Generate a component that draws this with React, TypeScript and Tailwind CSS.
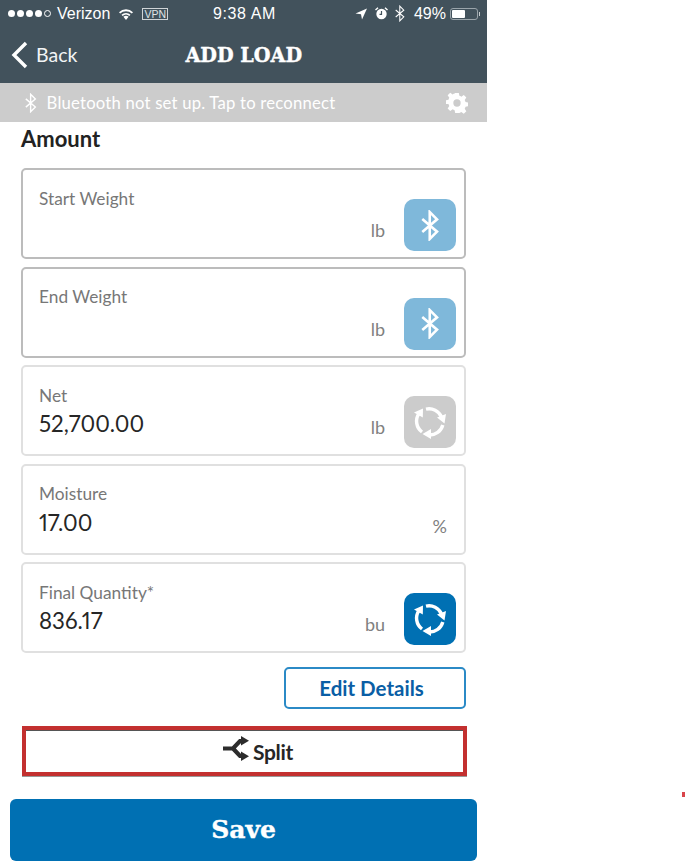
import React from "react";

const BtGlyph = ({ size = 24, sw = 2 }: { size?: number; sw?: number }) => (
  <svg width={size * 0.58} height={size} viewBox="0 0 14 24" fill="none" stroke="white" strokeWidth={sw} strokeLinejoin="miter">
    <path d="M1 7 L12.5 16.8 L6.8 22.5 V1.5 L12.5 7.2 L1 17" />
  </svg>
);

const Sync = () => (
  <svg width="34" height="34" viewBox="0 0 34 34" fill="none" stroke="white" strokeWidth="3.4">
    <path d="M13 4.2 A13.5 13.5 0 0 1 28.5 12" />
    <path fill="white" stroke="none" d="M33 9 L31.5 18.5 L24 12.5 Z" />
    <path d="M29.8 20 A13.5 13.5 0 0 1 16 30" />
    <path fill="white" stroke="none" d="M18 24 L18 34 L9.5 29 Z" />
    <path d="M9 27 A13.5 13.5 0 0 1 6 8.5" />
    <path fill="white" stroke="none" d="M1 7.5 L10 3.5 L9.8 12.5 Z" />
  </svg>
);

function Card({ label, value, unit, icon, dark }: { label: string; value?: string; unit: string; icon?: "bt" | "gray" | "blue"; dark?: boolean }) {
  return (
    <div className={`h-[91px] rounded-[5px] border-2 flex ${dark ? "border-[#bcbcbc]" : "border-[#e0e0e0]"}`}>
      <div className="flex-1 pl-4 pt-[16.5px] flex flex-col">
        <div className="text-[17.3px] leading-[24px] text-[#777777]">{label}</div>
        <div className="text-[22.3px] leading-[34px] text-[#262626] mt-[-0.5px] proportional-nums">{value}</div>
      </div>
      <div className="flex items-end pb-[15px]">
        <span className="text-[18px] leading-[24px] text-[#808080]">{unit}</span>
      </div>
      {icon ? (
        <div className="w-[52px] ml-[19px] mr-[8px] mt-[29px]">
          <div
            className={`w-[52px] h-[52px] rounded-[10px] flex items-center justify-center ${
              icon === "bt" ? "bg-[#7fb8da]" : icon === "gray" ? "bg-[#cccccc]" : "bg-[#0070b3]"
            }`}
          >
            {icon === "bt" ? <BtGlyph size={31} sw={2} /> : <Sync />}
          </div>
        </div>
      ) : (
        <div className="w-[17px]" />
      )}
    </div>
  );
}

export default function App() {
  return (
    <div className="relative h-[865px] w-[688px] bg-white overflow-hidden font-['Lato','Open_Sans',sans-serif]">
      <div className="w-[487px]">
        <header className="h-[83px] bg-[#42525c] text-white">
          <div className="relative h-[27px] flex items-center justify-between pl-[8px] pr-[7px] font-['Liberation_Sans',sans-serif]">
            <div className="flex items-center">
              <div className="flex items-center gap-[2px]">
                {[0, 1, 2, 3].map((i) => (
                  <span key={i} className="w-[7px] h-[7px] rounded-full bg-white" />
                ))}
                <span className="w-[7px] h-[7px] rounded-full border border-white" />
              </div>
              <span className="ml-[6px] text-[16px] leading-none">Verizon</span>
              <svg className="ml-[8px]" width="16" height="12" viewBox="0 0 16 12" fill="white">
                <path d="M8 12 L5.4 8.8 A4 4 0 0 1 10.6 8.8 Z" />
                <path d="M3.5 6.8 A6.6 6.6 0 0 1 12.5 6.8 L11.4 8 A5 5 0 0 0 4.6 8 Z" />
                <path d="M1 4.2 A10 10 0 0 1 15 4.2 L13.8 5.6 A8.2 8.2 0 0 0 2.2 5.6 Z" />
              </svg>
              <span className="ml-[8px] h-[12px] w-[26px] border border-[#cfd4d7] text-[10.5px] leading-[10px] text-center text-[#dfe2e4]">VPN</span>
            </div>
            <span className="absolute left-[213px] text-[16px] leading-none tracking-[0.6px]">9:38 AM</span>
            <div className="flex items-center">
              <svg width="12" height="12" viewBox="0 0 12 12" fill="white">
                <path d="M12 0.5 L0.5 5.5 L6 6.2 L7 11.5 Z" />
              </svg>
              <svg className="ml-[8px]" width="13" height="13" viewBox="0 0 13 13">
                <circle cx="6.5" cy="7" r="5.2" fill="white" />
                <path d="M6.5 4 V7.3 H4.5" stroke="#42525c" strokeWidth="1.2" fill="none" />
                <path d="M0.5 3 L3 0.7 M12.5 3 L10 0.7" stroke="white" strokeWidth="1.4" />
              </svg>
              <span className="ml-[7px] flex"><BtGlyph size={17} sw={1.5} /></span>
              <span className="ml-[9px] text-[16px] leading-none">49%</span>
              <div className="ml-[4px] flex items-center">
                <div className="w-[28px] h-[12px] rounded-[3px] border border-[#9aa4aa] p-[1px]">
                  <div className="w-[13px] h-full bg-white rounded-[1px]" />
                </div>
                <div className="ml-[1px] w-[1px] h-[4px] bg-[#c5cbce]" />
              </div>
            </div>
          </div>
          <div className="relative h-[56px] flex items-center justify-center">
            <div className="absolute left-[11px] top-[14px] flex items-center">
              <svg width="17" height="28" viewBox="0 0 17 28" fill="none" stroke="white" strokeWidth="3.4">
                <path d="M15 2 L3 14 L15 26" />
              </svg>
              <span className="ml-[8px] text-[19.5px] leading-[28px] text-[#f2f4f5]">Back</span>
            </div>
            <h1 className="mb-[1px] font-['DejaVu_Serif',serif] font-bold text-[20px] leading-none scale-x-[0.96] [-webkit-text-stroke:0.4px_white]">ADD LOAD</h1>
          </div>
        </header>

        <div className="h-[39px] bg-[#cccccc] flex items-center pl-[25px] pr-[19px] text-white">
          <BtGlyph size={20} sw={1.7} />
          <span className="ml-[10px] pt-[2px] text-[16.7px] leading-none tracking-[0.2px]">Bluetooth not set up. Tap to reconnect</span>
          <svg className="ml-auto" width="22" height="22" viewBox="0 0 24 24" fill="white">
            <path fillRule="evenodd" d="M10 1 h4 l.6 3.2 a8 8 0 0 1 2.1 .9 l2.7-1.8 2.8 2.8-1.8 2.7 a8 8 0 0 1 .9 2.1 l3.2 .6 v4 l-3.2 .6 a8 8 0 0 1-.9 2.1 l1.8 2.7-2.8 2.8-2.7-1.8 a8 8 0 0 1-2.1 .9 L14 23 h-4 l-.6-3.2 a8 8 0 0 1-2.1-.9 l-2.7 1.8-2.8-2.8 1.8-2.7 a8 8 0 0 1-.9-2.1 L-.5 13 v-4 l3.2-.6 a8 8 0 0 1 .9-2.1 L1.8 3.6 4.6 .8 l2.7 1.8 a8 8 0 0 1 2.1-.9 Z M12 8 a4 4 0 1 0 0 8 a4 4 0 0 0 0-8 Z" />
          </svg>
        </div>

        <div className="pl-[21px] pr-[21px]">
          <h2 className="mt-[3px] h-[43px] text-[22px] leading-[28px] font-bold text-[#222222]">Amount</h2>
          <div className="flex flex-col gap-[7.5px]">
            <Card label="Start Weight" unit="lb" icon="bt" dark />
            <Card label="End Weight" unit="lb" icon="bt" dark />
            <Card label="Net" value="52,700.00" unit="lb" icon="gray" />
            <Card label="Moisture" value="17.00" unit="%" />
            <Card label="Final Quantity*" value="836.17" unit="bu" icon="blue" />
          </div>
          <div className="mt-[14px] flex justify-end">
            <button className="w-[182px] h-[42px] pr-[7px] rounded-[5px] border-2 border-[#2b8ac6] text-[20.5px] font-bold text-[#0a5ea5]">Edit Details</button>
          </div>
          <div className="mt-[17px] ml-[1px] h-[50px] w-[445px] pl-[27px] border-[4px] border-[#c3302f] flex items-center justify-center shadow-[inset_0_1px_0_#555555,0_1px_0_#999999]">
            <svg className="mb-[5px]" width="26" height="25" viewBox="0 0 26 25" fill="#2c2c2c">
              <path d="M0 12.5 H10 L17 5 H20 M10 12.5 L17 20 H20" fill="none" stroke="#2c2c2c" strokeWidth="4.2" />
              <path d="M18 0 L26 4.8 L18 9.5 Z" />
              <path d="M18 15.5 L26 20.2 L18 25 Z" />
            </svg>
            <span className="ml-[4px] text-[21px] leading-none font-bold text-[#262626] tracking-[-0.3px]">Split</span>
          </div>
        </div>

        <div className="mt-[23px] mx-[10px] h-[62px] rounded-[6px] bg-[#0070b3] flex items-center justify-center">
          <span className="mb-[2px] font-['DejaVu_Serif',serif] font-bold text-[25px] leading-none text-white [-webkit-text-stroke:0.4px_white]">Save</span>
        </div>
      </div>
      <div className="absolute left-[682px] top-[792px] w-[3px] h-[5px] bg-[#d9454a]" />
    </div>
  );
}
